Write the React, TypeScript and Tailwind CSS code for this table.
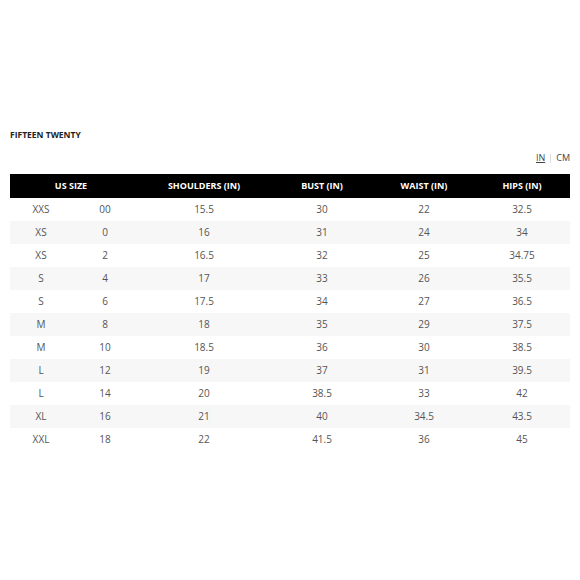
const rows: [string, string, string, string, string, string][] = [
  ["XXS", "00", "15.5", "30", "22", "32.5"],
  ["XS", "0", "16", "31", "24", "34"],
  ["XS", "2", "16.5", "32", "25", "34.75"],
  ["S", "4", "17", "33", "26", "35.5"],
  ["S", "6", "17.5", "34", "27", "36.5"],
  ["M", "8", "18", "35", "29", "37.5"],
  ["M", "10", "18.5", "36", "30", "38.5"],
  ["L", "12", "19", "37", "31", "39.5"],
  ["L", "14", "20", "38.5", "33", "42"],
  ["XL", "16", "21", "40", "34.5", "43.5"],
  ["XXL", "18", "22", "41.5", "36", "45"],
];

export default function App() {
  return (
    <div className="h-[580px] w-[580px] bg-white px-[10px] pt-[130px] font-['Open_Sans',sans-serif]">
      <h1 className="text-[8.5px] font-bold leading-[10px] text-[#222]">FIFTEEN TWENTY</h1>

      <div className="mt-[12px] flex items-center justify-end text-[9px] leading-[12px] text-[#444]">
        <span className="underline">IN</span>
        <span className="mx-[5px] h-[9px] w-px bg-[#ddd]" />
        <span>CM</span>
      </div>

      <table className="mt-[10px] w-[560px] table-fixed border-collapse text-center">
        <colgroup>
          <col className="w-[62px]" />
          <col className="w-[66px]" />
          <col className="w-[132px]" />
          <col className="w-[104px]" />
          <col className="w-[100px]" />
          <col className="w-[96px]" />
        </colgroup>
        <thead>
          <tr className="h-[24px] bg-black text-[9px] font-bold text-white">
            <th colSpan={2} className="pr-[6px]">US SIZE</th>
            <th>SHOULDERS (IN)</th>
            <th>BUST (IN)</th>
            <th>WAIST (IN)</th>
            <th>HIPS (IN)</th>
          </tr>
        </thead>
        <tbody className="text-[10px] text-[#555]">
          {rows.map((r, i) => (
            <tr key={i} className={`h-[23px] ${i % 2 === 1 ? "bg-[#f7f7f7]" : "bg-white"}`}>
              {r.map((v, j) => (
                <td key={j}>{v}</td>
              ))}
            </tr>
          ))}
        </tbody>
      </table>
    </div>
  );
}
